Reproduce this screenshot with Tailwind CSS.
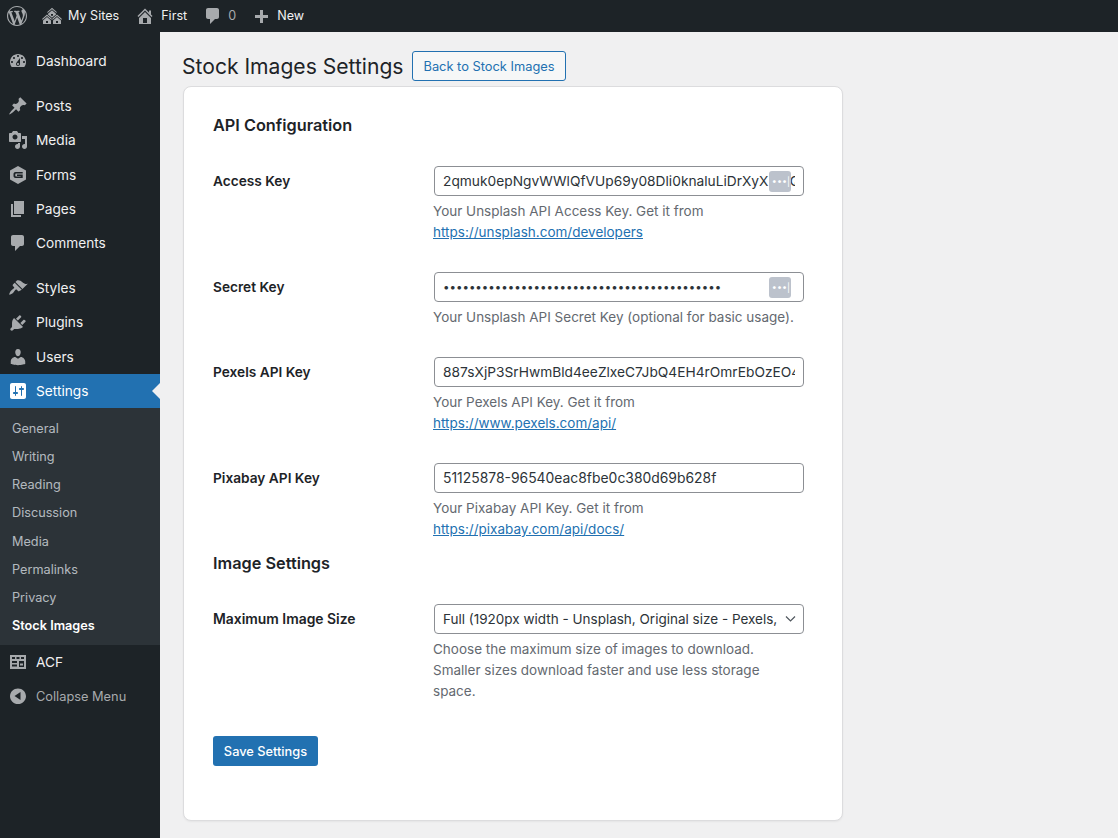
<!DOCTYPE html>
<html lang="en">
<head>
    <meta charset="UTF-8">
    <meta name="viewport" content="width=device-width, initial-scale=1.0">
    <title>Stock Images Settings</title>
    <script src="https://cdn.jsdelivr.net/npm/@tailwindcss/browser@4"></script>
</head>
<body class="bg-[#f0f0f1] font-['Inter',sans-serif] text-[13.5px] text-[#1d2327] antialiased">
    <div class="h-[838px] w-[1118px] overflow-hidden flex flex-col">
        <!-- admin bar -->
        <header class="h-8 shrink-0 bg-[#1d2327] flex items-center text-[12.6px] text-[#f0f0f1]">
            <svg class="w-5 h-5 ml-[7px] fill-[#a7aaad]" viewBox="0 0 20 20"><path d="M20 10c0-5.51-4.49-10-10-10C4.48 0 0 4.49 0 10c0 5.52 4.48 10 10 10 5.51 0 10-4.48 10-10zM7.78 15.37L4.37 6.22c.55-.02 1.17-.08 1.17-.08.5-.06.44-1.13-.06-1.11 0 0-1.45.11-2.37.11-.18 0-.37 0-.58-.01C4.12 2.69 6.87 1.11 10 1.11c2.33 0 4.45.87 6.05 2.34-.68-.11-1.65.39-1.65 1.58 0 .74.45 1.36.9 2.1.35.61.55 1.36.55 2.46 0 1.49-1.4 5-1.4 5l-3.03-8.37c.54-.02.82-.17.82-.17.5-.05.44-1.25-.06-1.22 0 0-1.44.12-2.38.12-.87 0-2.33-.12-2.33-.12-.5-.03-.56 1.2-.06 1.22l.92.08 1.26 3.41zM17.41 10c.24-.64.74-1.87.43-4.25.7 1.29 1.05 2.71 1.05 4.25 0 3.29-1.73 6.24-4.4 7.78.97-2.59 1.94-5.2 2.92-7.78zM6.1 18.09C3.12 16.65 1.11 13.53 1.11 10c0-1.3.23-2.48.72-3.59C3.25 10.3 4.67 14.2 6.1 18.09zm4.03-6.63l2.58 6.98c-.86.29-1.76.45-2.71.45-.79 0-1.57-.11-2.29-.33.81-2.38 1.62-4.74 2.42-7.1z"/></svg>
            <svg class="w-5 h-5 ml-[15px] fill-[#a7aaad]" viewBox="0 0 20 20"><path d="M14.27 6.87L10 3.14 5.73 6.87 5 6.14l5-4.38 5 4.38zM14 8.42l-4.05 3.43L6 8.38v-.74l4-3.5 4 3.5v.78zM11 9.7V8H9v1.7h2zm-1.73 4.03L5 10 .73 13.73 0 13l5-4.38L10 13zm10 0L15 10l-4.27 3.73L10 13l5-4.38L20 13zM5 11l4 3.5V18H1v-3.5zm10 0l4 3.5V18h-8v-3.5zM6 17v-2H4v2h2zm10 0v-2h-2v2h2z"/></svg>
            <span class="ml-[6px]">My Sites</span>
            <svg class="w-5 h-5 ml-[16px] fill-[#a7aaad]" viewBox="0 0 20 20"><path d="M16 8.5l1.53 1.53-1.06 1.06L10 4.62l-6.47 6.47-1.06-1.06L10 2.5l4 4v-2h2v4zm-6-2.46l6 5.99V18H4v-5.97zM12 17v-5H8v5h4z"/></svg>
            <span class="ml-[6px]">First</span>
            <svg class="w-5 h-5 ml-[16px] fill-[#a7aaad]" viewBox="0 0 20 20"><path d="M5 2h9c1.1 0 2 .9 2 2v7c0 1.1-.9 2-2 2h-2l-5 5v-5H5c-1.1 0-2-.9-2-2V4c0-1.1.9-2 2-2z"/></svg>
            <span class="ml-[5px] text-[#a7aaad]">0</span>
            <svg class="w-5 h-5 ml-[15px] fill-[#a7aaad]" viewBox="0 0 20 20"><path d="M17 9v3h-5v5H9v-5H4V9h5V4h3v5h5z"/></svg>
            <span class="ml-[6px]">New</span>
        </header>

        <div class="flex flex-1 min-h-0">
            <!-- sidebar -->
            <nav class="w-40 shrink-0 bg-[#1d2327] pt-3 text-[13.7px] text-[#f0f0f1]">
                <a class="h-[34px] flex items-center pl-[8px]"><svg class="w-5 h-5 mr-2 fill-[#a7aaad]" viewBox="0 0 20 20"><path d="M3.76 16h12.48c1.1-1.37 1.76-3.11 1.76-5 0-4.42-3.58-8-8-8s-8 3.58-8 8c0 1.89.66 3.63 1.76 5zM10 4c.55 0 1 .45 1 1s-.45 1-1 1-1-.45-1-1 .45-1 1-1zM6 6c.55 0 1 .45 1 1s-.45 1-1 1-1-.45-1-1 .45-1 1-1zm8 0c.55 0 1 .45 1 1s-.45 1-1 1-1-.45-1-1 .45-1 1-1zm-5.37 5.55L12 7v6c0 1.1-.9 2-2 2s-2-.9-2-2c0-.57.24-1.08.63-1.45zM4 10c.55 0 1 .45 1 1s-.45 1-1 1-1-.45-1-1 .45-1 1-1zm12 0c.55 0 1 .45 1 1s-.45 1-1 1-1-.45-1-1 .45-1 1-1zm-5 3c0-.55-.45-1-1-1s-1 .45-1 1 .45 1 1 1 1-.45 1-1z"/></svg>Dashboard</a>
                <div class="h-[11px]"></div>
                <a class="h-[34.25px] flex items-center pl-[8px]"><svg class="w-5 h-5 mr-2 fill-[#a7aaad]" viewBox="0 0 20 20"><path d="M10.44 3.02l1.82-1.82 6.36 6.35-1.83 1.82c-1.05-.68-2.48-.57-3.41.36l-.75.75c-.92.93-1.04 2.35-.35 3.41l-1.83 1.82-2.41-2.41-2.8 2.79c-.42.42-3.38 2.71-3.8 2.29s1.86-3.39 2.28-3.81l2.79-2.79L4.1 9.36l1.83-1.82c1.05.69 2.48.57 3.4-.36l.75-.75c.93-.92 1.05-2.35.36-3.41z"/></svg>Posts</a>
                <a class="h-[34.25px] flex items-center pl-[8px]"><svg class="w-5 h-5 mr-2 fill-[#a7aaad]" viewBox="0 0 20 20"><path d="M13 11V4c0-.55-.45-1-1-1h-1.67L9 1H5L3.67 3H2c-.55 0-1 .45-1 1v7c0 .55.45 1 1 1h10c.55 0 1-.45 1-1zM7 4.5c1.38 0 2.5 1.12 2.5 2.5S8.38 9.5 7 9.5 4.5 8.38 4.5 7 5.62 4.5 7 4.5zM14 6h5v10.5c0 1.38-1.12 2.5-2.5 2.5S14 17.88 14 16.5s1.12-2.5 2.5-2.5c.17 0 .34.02.5.05V9h-3V6zm-4 8.05V13h2v3.5c0 1.38-1.12 2.5-2.5 2.5S7 17.88 7 16.5 8.12 14 9.5 14c.17 0 .34.02.5.05z"/></svg>Media</a>
                <a class="h-[34.25px] flex items-center pl-[8px]"><svg class="w-5 h-5 mr-2 fill-[#a7aaad]" viewBox="0 0 20 20"><path fill-rule="evenodd" d="M10 1l8 4.500v9L10 19l-8-4.500v-9zM7.500 7C6.400 7 5.500 7.900 5.500 9v2c0 1.100.9 2 2 2h7.200V9.500H9V11h3.700v.5H8c-.4 0-.7-.3-.7-.7V9.200c0-.4.3-.7.7-.7h6.700V7z"/></svg><span class="pt-px">Forms</span></a>
                <a class="h-[34.25px] flex items-center pl-[8px]"><svg class="w-5 h-5 mr-2 fill-[#a7aaad]" viewBox="0 0 20 20"><path d="M6 15V2h10v13H6zm-1 1h8v2H3V5h2v11z"/></svg>Pages</a>
                <a class="h-[34.25px] flex items-center pl-[8px]"><svg class="w-5 h-5 mr-2 fill-[#a7aaad]" viewBox="0 0 20 20"><path d="M5 2h9c1.1 0 2 .9 2 2v7c0 1.1-.9 2-2 2h-2l-5 5v-5H5c-1.1 0-2-.9-2-2V4c0-1.1.9-2 2-2z"/></svg>Comments</a>
                <div class="h-[11px]"></div>
                <a class="h-[34.25px] flex items-center pl-[8px]"><svg class="w-5 h-5 mr-2 fill-[#a7aaad]" viewBox="0 0 20 20"><path d="M14.48 11.06L7.41 3.99l1.5-1.5c.5-.56 2.3-.47 3.51.32 1.21.8 1.43 1.28 2.91 2.1 1.18.64 2.45 1.26 4.45.85zm-.71.71L6.7 4.7 4.93 6.47c-.39.39-.39 1.02 0 1.41l1.06 1.06c.39.39.39 1.03 0 1.42-.6.6-1.43 1.11-2.21 1.69-.35.26-.7.53-1.01.84-.6.6-1.9 3.3-1.5 3.7s3.1-.9 3.7-1.5c.31-.31.58-.66.84-1.01.58-.78 1.09-1.61 1.69-2.21.39-.39 1.03-.39 1.42 0l1.06 1.06c.39.39 1.02.39 1.41 0z"/></svg>Styles</a>
                <a class="h-[34.25px] flex items-center pl-[8px]"><svg class="w-5 h-5 mr-2 fill-[#a7aaad]" viewBox="0 0 20 20"><path d="M13.11 4.36L9.87 7.6 8 5.73l3.24-3.24c.35-.34 1.05-.2 1.56.32.52.51.66 1.21.31 1.55zm-8 1.77l.91-1.12 9.01 9.01-1.19.84c-.71.71-2.63 1.16-3.82 1.16H6.14L4.9 17.26c-.59.59-1.54.59-2.12 0-.59-.58-.59-1.53 0-2.12l1.24-1.24v-3.88c0-1.13.4-3.19 1.09-3.89zm7.26 3.97l3.24-3.24c.34-.35 1.04-.21 1.55.31.52.51.66 1.21.31 1.55l-3.24 3.25z"/></svg>Plugins</a>
                <a class="h-[34.25px] flex items-center pl-[8px]"><svg class="w-5 h-5 mr-2 fill-[#a7aaad]" viewBox="0 0 20 20"><path d="M10 9.25c-2.27 0-2.73-3.44-2.73-3.44C7 4.02 7.82 2 9.97 2c2.16 0 2.98 2.02 2.71 3.81 0 0-.41 3.44-2.68 3.44zm0 2.57L12.72 10c2.39 0 4.52 2.33 4.52 4.53v2.49s-3.65 1.13-7.24 1.13c-3.65 0-7.24-1.13-7.24-1.13v-2.49c0-2.25 1.94-4.48 4.47-4.48z"/></svg>Users</a>
                <a class="relative h-[34px] flex items-center pl-[8px] bg-[#2271b1] text-white"><svg class="w-5 h-5 mr-2 fill-white" viewBox="0 0 20 20"><path d="M18 16V4c0-1.1-.9-2-2-2H4c-1.1 0-2 .9-2 2v12c0 1.1.9 2 2 2h12c1.1 0 2-.9 2-2zM8 11h1c.55 0 1 .45 1 1s-.45 1-1 1H8v1.5c0 .28-.22.5-.5.5s-.5-.22-.5-.5V13H6c-.55 0-1-.45-1-1s.45-1 1-1h1V5.5c0-.28.22-.5.5-.5s.5.22.5.5V11zm5-2h-1c-.55 0-1-.45-1-1s.45-1 1-1h1V5.5c0-.28.22-.5.5-.5s.5.22.5.5V7h1c.55 0 1 .45 1 1s-.45 1-1 1h-1v5.5c0 .28-.22.5-.5.5s-.5-.22-.5-.5V9z"/></svg>Settings<span class="absolute right-0 top-[9px] border-y-[8px] border-r-[8px] border-y-transparent border-r-[#f0f0f1]"></span></a>
                <div class="bg-[#2c3338] pt-[6.2px] pb-[5.3px] text-[12.7px] text-[#f0f6fc]/70">
                    <a class="h-[28.2px] flex items-center pl-3">General</a>
                    <a class="h-[28.2px] flex items-center pl-3">Writing</a>
                    <a class="h-[28.2px] flex items-center pl-3">Reading</a>
                    <a class="h-[28.2px] flex items-center pl-3">Discussion</a>
                    <a class="h-[28.2px] flex items-center pl-3">Media</a>
                    <a class="h-[28.2px] flex items-center pl-3">Permalinks</a>
                    <a class="h-[28.2px] flex items-center pl-3">Privacy</a>
                    <a class="h-[28.2px] flex items-center pl-3 font-semibold text-white">Stock Images</a>
                </div>
                <a class="h-[34px] flex items-center pl-[8px]"><svg class="w-5 h-5 mr-2 fill-[#a7aaad]" viewBox="0 0 20 20"><path fill-rule="evenodd" d="M2 3h16v14H2zM4 5v2h3V5zM8.500 5v2h3V5zM13 5v2h3V5zM4 9v2h5V9zM4 12.500v2h5v-2zM11 9v6h5V9zM12 11.500h3v2h-3z"/></svg>ACF</a>
                <a class="h-[34px] flex items-center pl-[8px] pt-px text-[12.8px] text-[#a7aaad]"><svg class="w-5 h-5 mr-2 fill-[#a7aaad]" viewBox="0 0 20 20"><path d="M10 2.500c-4.400 0-8 3.400-8 7.700s3.600 7.800 8 7.800 8-3.500 8-7.800-3.600-7.700-8-7.700zm2.500 11.500l-6-4 6-4z"/></svg>Collapse Menu</a>
            </nav>

            <!-- content -->
            <main class="flex-1 pl-[22px]">
                <div class="flex items-center h-[54px] pt-[14px]">
                    <h1 class="text-[21.1px] leading-[29px]">Stock Images Settings</h1>
                    <a class="ml-[9px] h-[30px] flex items-center px-[10px] pt-px border border-[#2271b1] rounded-[3px] bg-[#f6f7f7] text-[12.85px] text-[#2271b1]">Back to Stock Images</a>
                </div>
                <section class="ml-px w-[660px] h-[735px] bg-white border border-[#dcdcde] rounded-lg shadow-xs pt-[26px] px-[29px]">
                    <h2 class="text-[16.3px] leading-6 font-semibold mb-[29px]">API Configuration</h2>

                    <div class="grid grid-cols-[221px_370px] mb-[29px]">
                        <label class="font-semibold text-[13.7px] leading-[30px]">Access Key</label>
                        <div>
                            <div class="relative">
                                <input type="text" value="2qmuk0epNgvWWlQfVUp69y08Dli0knaluLiDrXyXFt0Q" class="w-full h-[30px] px-[8px] border border-[#8c8f94] rounded bg-white text-[13.75px] text-[#2c3338] outline-none">
                                <span class="absolute right-[13px] top-[5px] w-[22px] h-[21px] rounded-[3px] bg-[#bcc2cc] flex items-center justify-end pr-px text-white text-[9px] leading-none">•••|</span>
                            </div>
                            <p class="mt-[5px] -ml-px leading-[21px] text-[#646970]">Your Unsplash API Access Key. Get it from<br><a class="text-[#2271b1] underline">https://unsplash.com/developers</a></p>
                        </div>
                    </div>

                    <div class="grid grid-cols-[221px_370px] mb-[29px]">
                        <label class="font-semibold text-[13.7px] leading-[30px]">Secret Key</label>
                        <div>
                            <div class="relative">
                                <input type="password" value="abcdefghijklmnopqrstuvwxyzabcdefghijklmnopq" class="w-full h-[30px] px-[8px] border border-[#8c8f94] rounded bg-white text-[11.5px] text-[#2c3338] outline-none">
                                <span class="absolute right-[13px] top-[5px] w-[22px] h-[21px] rounded-[3px] bg-[#bcc2cc] flex items-center justify-end pr-px text-white text-[9px] leading-none">•••|</span>
                            </div>
                            <p class="mt-[5px] -ml-px leading-[21px] text-[#646970]">Your Unsplash API Secret Key (optional for basic usage).</p>
                        </div>
                    </div>

                    <div class="grid grid-cols-[221px_370px] mb-[29px]">
                        <label class="font-semibold text-[13.7px] leading-[30px]">Pexels API Key</label>
                        <div>
                            <input type="text" value="887sXjP3SrHwmBld4eeZlxeC7JbQ4EH4rOmrEbOzEO4xYv" class="w-full h-[30px] px-[8px] border border-[#8c8f94] rounded bg-white text-[13.75px] text-[#2c3338] outline-none">
                            <p class="mt-[5px] -ml-px leading-[21px] text-[#646970]">Your Pexels API Key. Get it from<br><a class="text-[#2271b1] underline">https://www.pexels.com/api/</a></p>
                        </div>
                    </div>

                    <div class="grid grid-cols-[221px_370px] mb-[11px]">
                        <label class="font-semibold text-[13.7px] leading-[30px]">Pixabay API Key</label>
                        <div>
                            <input type="text" value="51125878-96540eac8fbe0c380d69b628f" class="w-full h-[30px] px-[8px] border border-[#8c8f94] rounded bg-white text-[13.9px] text-[#2c3338] outline-none">
                            <p class="mt-[5px] -ml-px leading-[21px] text-[#646970]">Your Pixabay API Key. Get it from<br><a class="text-[#2271b1] underline">https://pixabay.com/api/docs/</a></p>
                        </div>
                    </div>

                    <h2 class="text-[16.3px] leading-6 font-semibold mb-[29px]">Image Settings</h2>

                    <div class="grid grid-cols-[221px_370px] mb-[34px]">
                        <label class="font-semibold text-[13.9px] leading-[30px]">Maximum Image Size</label>
                        <div>
                            <div class="relative">
                                <select class="appearance-none w-full h-[30px] pl-[8px] pr-[24px] border border-[#8c8f94] rounded bg-white text-[13.5px] text-[#2c3338] outline-none">
                                    <option>Full (1920px width - Unsplash, Original size - Pexels, Pixabay)</option>
                                </select>
                                <svg class="absolute right-[8px] top-[11px] w-[11px] h-[8px] fill-none stroke-[#50575e] stroke-[1.2]" viewBox="0 0 11 8"><path d="M1 1.500l4.500 4.500 4.500-4.500"/></svg>
                            </div>
                            <p class="mt-[5px] -ml-px leading-[21px] text-[#646970]">Choose the maximum size of images to download. Smaller sizes download faster and use less storage space.</p>
                        </div>
                    </div>

                    <button class="w-[105px] h-[30px] pt-px rounded-[3px] bg-[#2271b1] text-white text-[12.8px] font-medium">Save Settings</button>
                </section>
            </main>
        </div>
    </div>
</body>
</html>
